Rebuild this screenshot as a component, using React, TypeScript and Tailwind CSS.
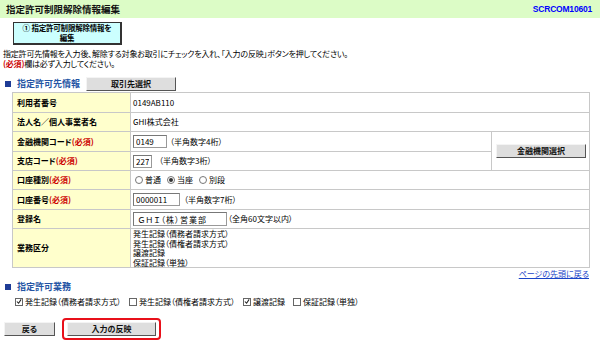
import React from "react";

function Radio({ checked, label }: { checked?: boolean; label: string }) {
  return (
    <span className="flex items-center gap-[2px] mr-[6px]">
      <span className="w-[8px] h-[8px] rounded-full border border-[#777] bg-white flex items-center justify-center">
        {checked && <span className="w-[4px] h-[4px] rounded-full bg-[#333]" />}
      </span>
      <span>{label}</span>
    </span>
  );
}

function Check({ checked, label }: { checked?: boolean; label: string }) {
  return (
    <span className="flex items-center gap-[2px] mr-[8px]">
      <span className="w-[8px] h-[8px] border border-[#666] bg-white flex items-center justify-center">
        {checked && (
          <svg width="7" height="7" viewBox="0 0 7 7">
            <path d="M1 3.5 L3 5.5 L6 1" stroke="#222" strokeWidth="1.2" fill="none" />
          </svg>
        )}
      </span>
      <span>{label}</span>
    </span>
  );
}

function Btn({ children, w }: { children: React.ReactNode; w: string }) {
  return (
    <button
      className={`${w} h-[14px] bg-[#dedede] border border-t-[#f4f4f4] border-l-[#f4f4f4] border-r-[#555] border-b-[#555] flex items-center justify-center font-bold text-[8px] leading-none text-[#111]`}
    >
      {children}
    </button>
  );
}

function SectionTitle({ children }: { children: React.ReactNode }) {
  return (
    <div className="flex items-center pl-[5px]">
      <span className="w-[6px] h-[6px] bg-[#1f3c96]" />
      <span className="ml-[6px] font-bold text-[9px] text-[#2454a4]">{children}</span>
    </div>
  );
}

const Req = () => <span className="text-[#cc0000] font-bold">(必須)</span>;

export default function App() {
  const label = "bg-[#ffffcc] pl-[4px] flex items-center font-bold";
  const val = "bg-white pl-[2px] flex items-center";
  const inp = "h-[13px] border border-[#999] border-t-[#777] border-l-[#777] bg-white px-[2px] text-[8px] leading-none text-black outline-none";
  return (
    <div className="w-[600px] h-[347px] overflow-hidden bg-white text-black text-[8px] leading-[10px] font-['Noto_Sans_CJK_JP','Noto_Sans_CJK_SC',sans-serif] [font-feature-settings:'palt']">
      {/* header */}
      <div className="h-[18px] bg-[#dcfcc6] flex items-center justify-between pl-[6px] pr-[8px]">
        <span className="font-bold text-[9.5px] text-[#111]">指定許可制限解除情報編集</span>
        <span className="font-bold text-[8.5px] text-[#0000ff] font-['Liberation_Sans',sans-serif] tracking-[-0.2px]">SCRCOM10601</span>
      </div>

      {/* step box */}
      <div className="pl-[13px] pt-[4px]">
        <div className="w-[109px] h-[23px] bg-[#ccffff] border border-[#333] border-r-2 border-b-2 flex flex-col items-center justify-center font-bold text-[7.5px] leading-[10px] whitespace-nowrap tracking-[-0.2px]">
          <span className="block h-[10px]">① 指定許可制限解除情報を</span>
          <span className="block h-[10px]">編集</span>
        </div>
      </div>

      {/* instructions */}
      <div className="pl-[3px] pt-[4px] tracking-[-0.2px]">
        <p>指定許可先情報を入力後、解除する対象お取引にチェックを入れ、「入力の反映」ボタンを押してください。</p>
        <p>
          <Req />
          欄は必ず入力してください。
        </p>
      </div>

      {/* section 1 header */}
      <div className="mt-[7px] h-[15px] flex items-center">
        <SectionTitle>指定許可先情報</SectionTitle>
        <div className="ml-[6px]">
          <Btn w="w-[90px]">取引先選択</Btn>
        </div>
      </div>

      {/* table */}
      <div className="ml-[12px] mt-[1px] w-[578px] grid grid-cols-[117px_360px_97px] grid-rows-[19px_18px_19px_18px_18px_19px_18px_38px] gap-[1px] p-[1px] bg-[#c8c8c8]">
        <div className={label}>利用者番号</div>
        <div className={`${val} col-span-2`}>0149AB110</div>

        <div className={label}>法人名／個人事業者名</div>
        <div className={`${val} col-span-2`}>GHI株式会社</div>

        <div className={label}>
          金融機関コード<Req />
        </div>
        <div className={val}>
          <input readOnly value="0149" className={`${inp} w-[34px]`} />
          <span className="ml-[3px]">（半角数字4桁）</span>
        </div>
        <div className="bg-white row-span-2 flex items-center pl-[4px]">
          <Btn w="w-[90px]">金融機関選択</Btn>
        </div>

        <div className={label}>
          支店コード<Req />
        </div>
        <div className={val}>
          <input readOnly value="227" className={`${inp} w-[19px]`} />
          <span className="ml-[7px]">（半角数字3桁）</span>
        </div>

        <div className={label}>
          口座種別<Req />
        </div>
        <div className={`${val} col-span-2 pl-[4px]`}>
          <Radio label="普通" />
          <Radio checked label="当座" />
          <Radio label="別段" />
        </div>

        <div className={label}>
          口座番号<Req />
        </div>
        <div className={`${val} col-span-2`}>
          <input readOnly value="0000011" className={`${inp} w-[47px]`} />
          <span className="ml-[4px]">（半角数字7桁）</span>
        </div>

        <div className={label}>登録名</div>
        <div className={`${val} col-span-2`}>
          <input readOnly value="ＧＨＩ（株）営業部" className={`${inp} w-[94px] h-[14px] px-[4px] tracking-[1px]`} />
          <span className="ml-[1px]">（全角60文字以内）</span>
        </div>

        <div className={label}>業務区分</div>
        <div className="bg-white col-span-2 pl-[2px] flex flex-col justify-center leading-[9.5px]">
          <span>発生記録（債務者請求方式）</span>
          <span>発生記録（債権者請求方式）</span>
          <span>譲渡記録</span>
          <span>保証記録（単独）</span>
        </div>
      </div>

      {/* link */}
      <div className="h-[12px] flex items-center justify-end pr-[11px]">
        <a className="text-[#1a44c8] underline">ページの先頭に戻る</a>
      </div>

      {/* section 2 */}
      <div className="h-[13px] flex items-center">
        <SectionTitle>指定許可業務</SectionTitle>
      </div>
      <div className="mt-[2px] h-[13px] flex items-center pl-[15px]">
        <Check checked label="発生記録（債務者請求方式）" />
        <Check label="発生記録（債権者請求方式）" />
        <Check checked label="譲渡記録" />
        <Check label="保証記録（単独）" />
      </div>

      {/* buttons */}
      <div className="mt-[10px] flex items-center pl-[4px]">
        <Btn w="w-[51px]">戻る</Btn>
        <div className="ml-[7px] border-2 border-[#e8101a] rounded-[4px] px-[3px] py-[2px]">
          <Btn w="w-[89px]">入力の反映</Btn>
        </div>
      </div>
    </div>
  );
}
